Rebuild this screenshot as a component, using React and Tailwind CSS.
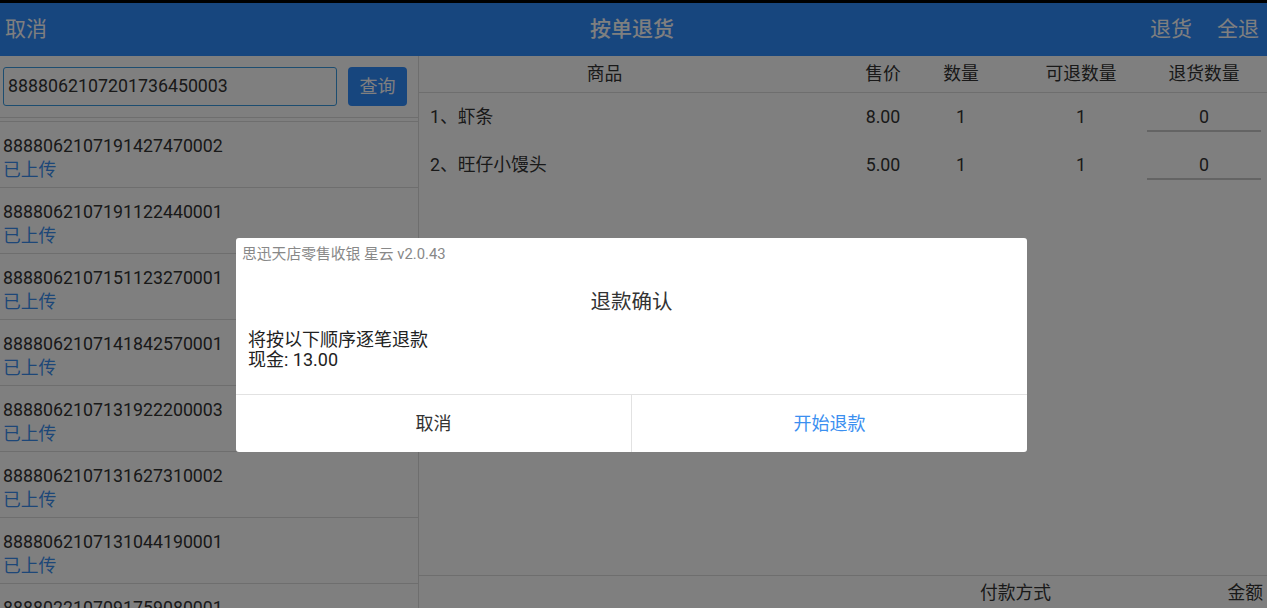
const ORDERS = [
  "8888062107191427470002",
  "8888062107191122440001",
  "8888062107151123270001",
  "8888062107141842570001",
  "8888062107131922200003",
  "8888062107131627310002",
  "8888062107131044190001",
  "8888022107091759080001",
];

const ITEMS = [
  { name: "1、虾条", price: "8.00", qty: 1, left: 1, back: 0 },
  { name: "2、旺仔小馒头", price: "5.00", qty: 1, left: 1, back: 0 },
];

export default function App() {
  return (
    <div className="relative flex h-[608px] w-full flex-col overflow-hidden bg-white font-[Roboto,'Noto_Sans_CJK_SC',sans-serif] text-[17.8px] text-[#333]">
      {/* 상단 검은 줄 */}
      <div className="h-[3px] shrink-0 bg-black" />

      {/* 헤더 */}
      <header className="flex h-[53px] shrink-0 items-center bg-[#2f8cfc] text-[21px] text-white">
        <div className="flex flex-1 pl-[5px]">取消</div>
        <div className="font-medium">按单退货</div>
        <div className="flex flex-1 justify-end gap-[25px] pr-[8px]">
          <span>退货</span>
          <span>全退</span>
        </div>
      </header>

      <div className="flex min-h-0 flex-1">
        {/* 왼쪽: 검색 + 주문 목록 */}
        <aside className="flex w-[419px] shrink-0 flex-col border-r border-[#dcdcdc]">
          <div className="flex h-[62px] shrink-0 items-start gap-[11px] border-b border-[#dcdcdc] pl-[3px] pt-[11px]">
            <div className="flex h-[39px] w-[334px] items-center rounded-[3px] border border-[#3a9be0] pl-[4px] text-[#333]">
              8888062107201736450003
            </div>
            <button className="h-[39px] w-[59px] rounded-[4px] bg-[#2f8cfc] text-[18px] text-white">
              查询
            </button>
          </div>
          <ul className="mt-[3px] flex flex-col border-t border-[#dcdcdc]">
            {ORDERS.map((no) => (
              <li
                key={no}
                className="h-[66px] shrink-0 border-b border-[#dcdcdc] pl-[3px] pt-[12px] leading-[24px]"
              >
                <div>{no}</div>
                <div className="text-[#3b8ff0]">已上传</div>
              </li>
            ))}
          </ul>
        </aside>

        {/* 오른쪽: 상품 표 */}
        <section className="flex min-w-0 flex-1 flex-col">
          <div className="flex h-[37px] shrink-0 items-center border-b border-[#dcdcdc]">
            <div className="w-[371px] text-center">商品</div>
            <div className="ml-[50px] w-[86px] text-center">售价</div>
            <div className="w-[70px] text-center">数量</div>
            <div className="ml-[20px] w-[130px] text-center">可退数量</div>
            <div className="w-[116px] text-center">退货数量</div>
          </div>
          {ITEMS.map((it) => (
            <div key={it.name} className="flex h-[48px] shrink-0 items-center">
              <div className="w-[371px] pl-[11px]">{it.name}</div>
              <div className="ml-[50px] w-[86px] text-center">{it.price}</div>
              <div className="w-[70px] text-center">{it.qty}</div>
              <div className="ml-[20px] w-[130px] text-center">{it.left}</div>
              <div className="flex w-[116px] flex-col items-center">
                <span className="mt-[3px] leading-[24px]">{it.back}</span>
                <span className="mt-[1px] h-[2px] w-[114px] bg-[#c8c8c8]" />
              </div>
            </div>
          ))}
          <div className="flex-1" />
          <div className="flex h-[33px] shrink-0 items-center border-t border-[#dcdcdc] pt-[2px]">
            <div className="ml-[561px] w-[70px] whitespace-nowrap text-center">付款方式</div>
            <div className="flex-1 pr-[4px] text-right">金额</div>
          </div>
        </section>
      </div>

      {/* 다이얼로그 */}
      <div className="absolute inset-0 bg-black/50">
        <div className="ml-[236px] mt-[238px] flex w-[791px] flex-col overflow-hidden rounded-[3px] bg-white">
          <div className="px-[6px] pt-[6px] text-[14.8px] leading-[20px] text-[#888]">
            思迅天店零售收银 星云 v2.0.43
          </div>
          <div className="mt-[24px] text-center text-[20.5px] leading-[28px] text-[#333]">
            退款确认
          </div>
          <div className="mt-[14px] px-[12px] pb-[24px] text-[18px] leading-[20px] text-[#222]">
            <div>将按以下顺序逐笔退款</div>
            <div>现金: 13.00</div>
          </div>
          <div className="flex h-[58px] border-t border-[#e2e2e2]">
            <button className="flex-1 text-[18px] text-[#333]">取消</button>
            <div className="w-px bg-[#e2e2e2]" />
            <button className="flex-1 text-[18px] text-[#3b8ff0]">开始退款</button>
          </div>
        </div>
      </div>
    </div>
  );
}
